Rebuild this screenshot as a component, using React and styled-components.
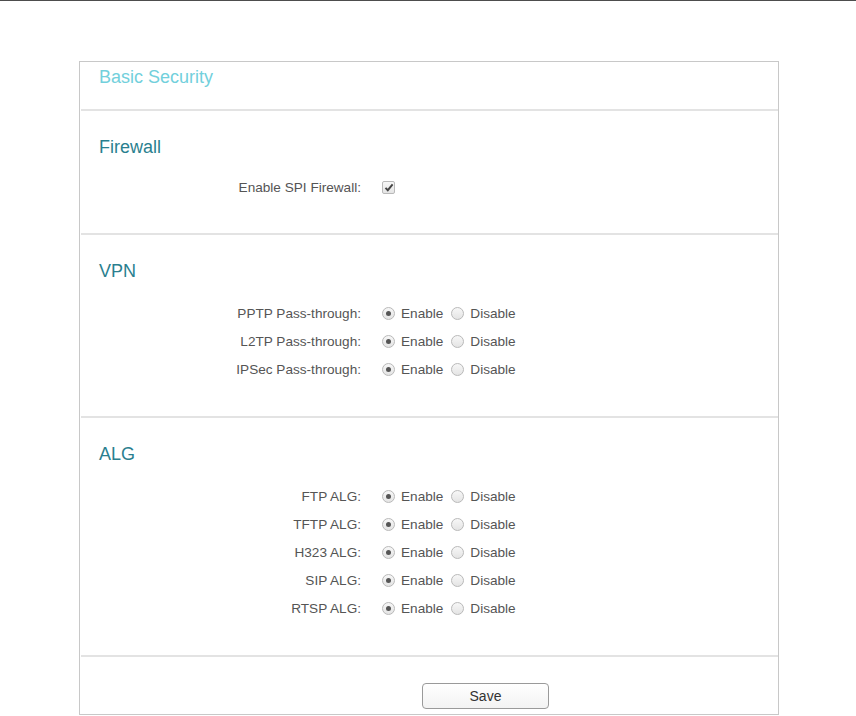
import styled, { createGlobalStyle } from "styled-components";

const GlobalStyle = createGlobalStyle`
  html, body {
    margin: 0;
    padding: 0;
    background: #ffffff;
    font-family: "Liberation Sans", Arial, sans-serif;
  }
`;

const TopBar = styled.div`
  height: 1px;
  background: #4d4d4d;
`;

const Card = styled.div`
  width: 698px;
  margin: 60px 0 0 79px;
  border: 1px solid #c8c8c8;
  background: #fff;
`;

const CardHeader = styled.div`
  height: 47px;
  padding: 3px 0 0 19px;
  box-sizing: border-box;
  font-size: 18px;
  line-height: 24px;
  color: #72d0dc;
`;

const Section = styled.section`
  border-top: 2px solid #e3e3e3;
  margin-left: 1px;
  padding: ${(p) =>
    p.$footer ? "26px 0 5px 341px" : p.$compact ? "25px 0 32px 0" : "25px 0 33px 0"};
`;

const SectionTitle = styled.h3`
  margin: 0 0 ${(p) => (p.$compact ? "15px" : "17px")} 18px;
  font-size: 18px;
  font-weight: normal;
  line-height: 22px;
  color: #2a7f8f;
`;

const Row = styled.div`
  display: flex;
  align-items: center;
  height: 28px;
  font-size: 13.6px;
  color: #555;
`;

const Label = styled.div`
  width: 301px;
  text-align: right;
  padding-right: 21px;
  box-sizing: border-box;
  flex: none;
`;

const Option = styled.label`
  display: inline-flex;
  align-items: center;
  margin-right: ${(p) => (p.$first ? "8px" : "0")};
`;

const RadioDot = styled.span`
  width: 11px;
  height: 11px;
  border-radius: 50%;
  border: 1px solid #b9b9b9;
  background: linear-gradient(#f7f7f7, #e4e4e4);
  margin-right: 6px;
  display: flex;
  align-items: center;
  justify-content: center;
  &::after {
    content: "";
    width: 5px;
    height: 5px;
    border-radius: 50%;
    background: ${(p) => (p.$checked ? "#555" : "transparent")};
  }
`;

const Check = styled.span`
  width: 11px;
  height: 11px;
  border: 1px solid #b9b9b9;
  border-radius: 2px;
  background: linear-gradient(#f7f7f7, #e4e4e4);
  display: flex;
  align-items: center;
  justify-content: center;
`;

const SaveButton = styled.button`
  width: 127px;
  height: 26px;
  border: 1px solid #9a9a9a;
  border-radius: 4px;
  background: linear-gradient(#ffffff, #f3f3f3);
  font-family: "Liberation Sans", Arial, sans-serif;
  font-size: 14px;
  color: #333;
  padding: 0;
`;

const RadioRow = ({ label }) => (
  <Row>
    <Label>{label}</Label>
    <Option $first>
      <RadioDot $checked />
      Enable
    </Option>
    <Option>
      <RadioDot />
      Disable
    </Option>
  </Row>
);

const vpn = ["PPTP Pass-through:", "L2TP Pass-through:", "IPSec Pass-through:"];
const alg = ["FTP ALG:", "TFTP ALG:", "H323 ALG:", "SIP ALG:", "RTSP ALG:"];

export default function App() {
  return (
    <>
      <GlobalStyle />
      <TopBar />
      <Card>
        <CardHeader>Basic Security</CardHeader>
        <Section $compact>
          <SectionTitle $compact>Firewall</SectionTitle>
          <Row>
            <Label>Enable SPI Firewall:</Label>
            <Check>
              <svg width="10" height="9" viewBox="0 0 10 9">
                <path d="M1.5 4.8 L3.8 7.2 L8.6 1.4" fill="none" stroke="#444" strokeWidth="1.9" />
              </svg>
            </Check>
          </Row>
        </Section>
        <Section>
          <SectionTitle>VPN</SectionTitle>
          {vpn.map((l) => (
            <RadioRow key={l} label={l} />
          ))}
        </Section>
        <Section>
          <SectionTitle>ALG</SectionTitle>
          {alg.map((l) => (
            <RadioRow key={l} label={l} />
          ))}
        </Section>
        <Section $footer>
          <SaveButton>Save</SaveButton>
        </Section>
      </Card>
    </>
  );
}
